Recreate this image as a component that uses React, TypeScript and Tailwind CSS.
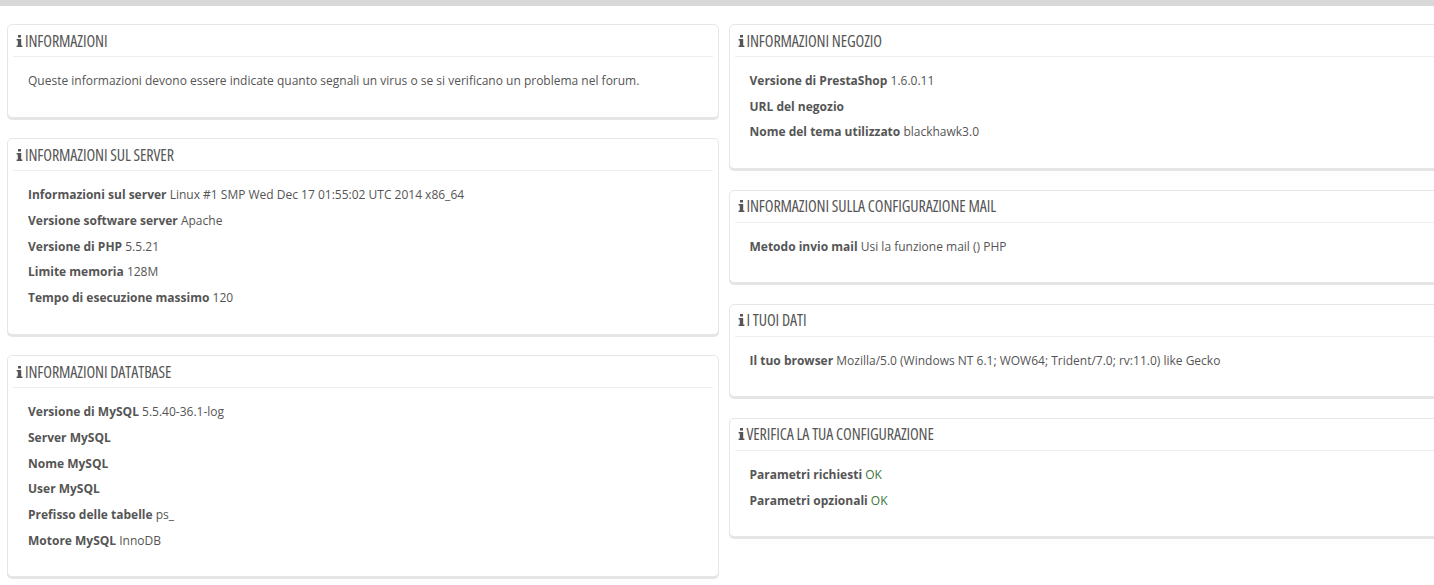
type Row = { label?: string; value?: string; ok?: boolean };

function InfoIcon() {
  return (
    <svg viewBox="0 0 7 12" className="h-[12px] w-[7px] shrink-0 fill-[#555555]" aria-hidden="true">
      <path d="M2 0h3v2.6H2zM0.6 4h4.6v6.6h1.2V12H0.6v-1.4h1.2V5.4H0.6z" />
    </svg>
  );
}

function Panel({ title, rows }: { title: string; rows: Row[] }) {
  return (
    <section className="rounded-[5px] border border-[#e6e6e6] bg-white px-[5px] shadow-[0_2px_0_rgba(0,0,0,0.1)]">
      <h3 className="flex h-[32px] items-center border-b border-[#eeeeee] pl-[3px] text-[#555555]">
        <InfoIcon />
        <span className="ml-[2px] font-['Open_Sans',sans-serif] text-[16px] leading-none whitespace-nowrap [font-stretch:75%] [letter-spacing:-0.1px]">
          {title}
        </span>
      </h3>
      <div className="pt-[15px] pb-[19px] pl-[15px]">
        {rows.map((row, i) => (
          <p key={i} className="mb-[7.7px] h-[18px] text-[12px] leading-[18px] whitespace-nowrap text-[#555555]">
            {row.label && <b className="font-bold">{row.label}</b>}
            {row.label && row.value ? ' ' : ''}
            {row.value && <span className={row.ok ? 'text-[#3c763d]' : ''}>{row.value}</span>}
          </p>
        ))}
      </div>
    </section>
  );
}

export default function App() {
  return (
    <div className="h-[585px] w-[1434px] overflow-hidden bg-white font-['Open_Sans',sans-serif]">
      <div className="h-[6px] bg-[#d8d8d8]" />
      <div className="flex gap-[9.5px] pt-[18px] pl-[7px]">
        <div className="flex w-[712px] shrink-0 flex-col gap-[20.5px]">
          <Panel
            title="INFORMAZIONI"
            rows={[{ value: 'Queste informazioni devono essere indicate quanto segnali un virus o se si verificano un problema nel forum.' }]}
          />
          <Panel
            title="INFORMAZIONI SUL SERVER"
            rows={[
              { label: 'Informazioni sul server', value: 'Linux #1 SMP Wed Dec 17 01:55:02 UTC 2014 x86_64' },
              { label: 'Versione software server', value: 'Apache' },
              { label: 'Versione di PHP', value: '5.5.21' },
              { label: 'Limite memoria', value: '128M' },
              { label: 'Tempo di esecuzione massimo', value: '120' },
            ]}
          />
          <Panel
            title="INFORMAZIONI DATATBASE"
            rows={[
              { label: 'Versione di MySQL', value: '5.5.40-36.1-log' },
              { label: 'Server MySQL' },
              { label: 'Nome MySQL' },
              { label: 'User MySQL' },
              { label: 'Prefisso delle tabelle', value: 'ps_' },
              { label: 'Motore MySQL', value: 'InnoDB' },
            ]}
          />
        </div>
        <div className="flex w-[720px] shrink-0 flex-col gap-[20.5px]">
          <Panel
            title="INFORMAZIONI NEGOZIO"
            rows={[
              { label: 'Versione di PrestaShop', value: '1.6.0.11' },
              { label: 'URL del negozio' },
              { label: 'Nome del tema utilizzato', value: 'blackhawk3.0' },
            ]}
          />
          <Panel
            title="INFORMAZIONI SULLA CONFIGURAZIONE MAIL"
            rows={[{ label: 'Metodo invio mail', value: 'Usi la funzione mail () PHP' }]}
          />
          <Panel
            title="I TUOI DATI"
            rows={[{ label: 'Il tuo browser', value: 'Mozilla/5.0 (Windows NT 6.1; WOW64; Trident/7.0; rv:11.0) like Gecko' }]}
          />
          <Panel
            title="VERIFICA LA TUA CONFIGURAZIONE"
            rows={[
              { label: 'Parametri richiesti', value: 'OK', ok: true },
              { label: 'Parametri opzionali', value: 'OK', ok: true },
            ]}
          />
        </div>
      </div>
    </div>
  );
}
